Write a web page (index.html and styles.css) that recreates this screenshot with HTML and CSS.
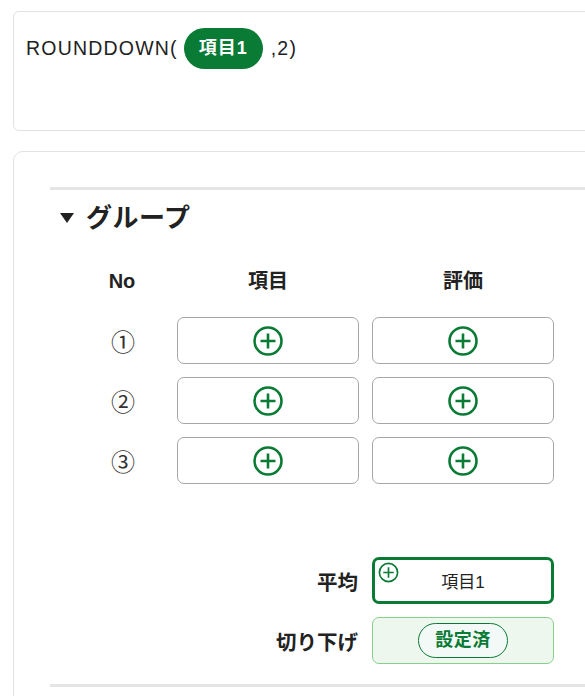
FILE: index.html
```html
<!DOCTYPE html>
<html lang="ja">
<head>
    <meta charset="UTF-8">
    <meta name="viewport" content="width=device-width, initial-scale=1.0">
    <title>ROUNDDOWN</title>
    <link rel="stylesheet" href="styles.css">
</head>
<body>
    <div class="formula-card">
        <span class="formula-text">ROUNDDOWN(</span>
        <span class="token">項目1</span>
        <span class="formula-text">,2)</span>
    </div>

    <div class="panel">
        <div class="group">
            <div class="group-title">
                <span class="caret"></span>
                <span>グループ</span>
            </div>

            <div class="grid">
                <div class="head">No</div>
                <div class="head">項目</div>
                <div class="head">評価</div>

                <div class="num">①</div>
                <button class="slot"><svg class="plus" viewBox="0 0 30 30"><circle cx="15" cy="15" r="13.5"/><path d="M15 7.5 V22.5 M7.5 15 H22.5"/></svg></button>
                <button class="slot"><svg class="plus" viewBox="0 0 30 30"><circle cx="15" cy="15" r="13.5"/><path d="M15 7.5 V22.5 M7.5 15 H22.5"/></svg></button>

                <div class="num">②</div>
                <button class="slot"><svg class="plus" viewBox="0 0 30 30"><circle cx="15" cy="15" r="13.5"/><path d="M15 7.5 V22.5 M7.5 15 H22.5"/></svg></button>
                <button class="slot"><svg class="plus" viewBox="0 0 30 30"><circle cx="15" cy="15" r="13.5"/><path d="M15 7.5 V22.5 M7.5 15 H22.5"/></svg></button>

                <div class="num">③</div>
                <button class="slot"><svg class="plus" viewBox="0 0 30 30"><circle cx="15" cy="15" r="13.5"/><path d="M15 7.5 V22.5 M7.5 15 H22.5"/></svg></button>
                <button class="slot"><svg class="plus" viewBox="0 0 30 30"><circle cx="15" cy="15" r="13.5"/><path d="M15 7.5 V22.5 M7.5 15 H22.5"/></svg></button>

                <div class="label first-result">平均</div>
                <div class="slot selected first-result">
                    <svg class="plus small" viewBox="0 0 30 30"><circle cx="15" cy="15" r="13"/><path d="M15 7.5 V22.5 M7.5 15 H22.5"/></svg>
                    <span>項目1</span>
                </div>

                <div class="label">切り下げ</div>
                <div class="slot done">
                    <span class="done-pill">設定済</span>
                </div>
            </div>
        </div>
        <div class="group-end"></div>
    </div>
</body>
</html>
```

FILE: styles.css
```css
body {
    margin: 0;
    background-color: #fff;
    color: #222;
    font-family: "Liberation Sans", "Noto Sans CJK JP", sans-serif;
    overflow: hidden;
}
.formula-card {
    margin: 11px 0 0 13px;
    width: 640px;
    border: 1px solid #e2e2e2;
    border-radius: 6px;
    padding: 16px 12px 0;
    height: 102px;
    display: flex;
    align-items: flex-start;
}
.formula-text {
    font-size: 19.5px;
    letter-spacing: 1.2px;
    line-height: 41px;
}
.token {
    background-color: #0a7b35;
    color: #fff;
    font-weight: bold;
    font-size: 18px;
    line-height: 41px;
    padding: 0 15px;
    border-radius: 21px;
    margin: 0 8px 0 6px;
    letter-spacing: 1px;
}
.panel {
    margin: 20px 0 0 13px;
    width: 640px;
    height: 600px;
    border: 1px solid #e2e2e2;
    border-radius: 10px;
    padding: 35px 0 0 36px;
}
.group {
    border-top: 3px solid #e5e5e5;
}
.group-title {
    display: flex;
    align-items: center;
    gap: 12px;
    margin-top: 13px;
    padding-left: 10px;
    font-size: 26px;
    font-weight: bold;
    line-height: 30px;
    letter-spacing: 0.5px;
}
.caret {
    width: 0;
    height: 0;
    border-left: 7.5px solid transparent;
    border-right: 7.5px solid transparent;
    border-top: 10px solid #222;
}
.grid {
    display: grid;
    grid-template-columns: 84px 182px 182px;
    column-gap: 13px;
    row-gap: 13px;
    margin: 35px 0 0 30px;
}
.head {
    text-align: center;
    font-size: 20px;
    font-weight: bold;
    line-height: 26px;
    padding-bottom: 10px;
}
.num {
    display: flex;
    align-items: center;
    justify-content: center;
    padding-left: 2px;
    font-size: 24px;
    color: #333;
}
.slot {
    height: 47px;
    box-sizing: border-box;
    border: 1px solid #a6a6a6;
    border-radius: 7px;
    background-color: #fff;
    display: flex;
    align-items: center;
    justify-content: center;
    padding: 0;
    position: relative;
    font-family: inherit;
}
.plus {
    width: 30px;
    height: 30px;
    fill: none;
    stroke: #0a7b35;
    stroke-width: 2.6;
}
.plus.small {
    position: absolute;
    left: 3px;
    top: 2px;
    width: 21px;
    height: 21px;
    stroke-width: 2.4;
}
.label {
    grid-column: 1 / 3;
    padding-right: 1px;
    font-size: 20.5px;
    font-weight: bold;
    display: flex;
    align-items: center;
    justify-content: flex-end;
}
.first-result {
    margin-top: 60px;
}
.selected {
    border: 3px solid #0a7b35;
    font-size: 17px;
}
.done {
    background-color: #edf7ee;
    border-color: #86d08c;
}
.done-pill {
    border: 1px solid #0a7b35;
    border-radius: 18px;
    background-color: #f3f9f6;
    color: #0a7b35;
    font-weight: bold;
    font-size: 18px;
    line-height: 33px;
    padding: 0 16px;
    letter-spacing: 0.5px;
}
.group-end {
    margin-top: 20px;
    border-top: 3px solid #e5e5e5;
}
```
